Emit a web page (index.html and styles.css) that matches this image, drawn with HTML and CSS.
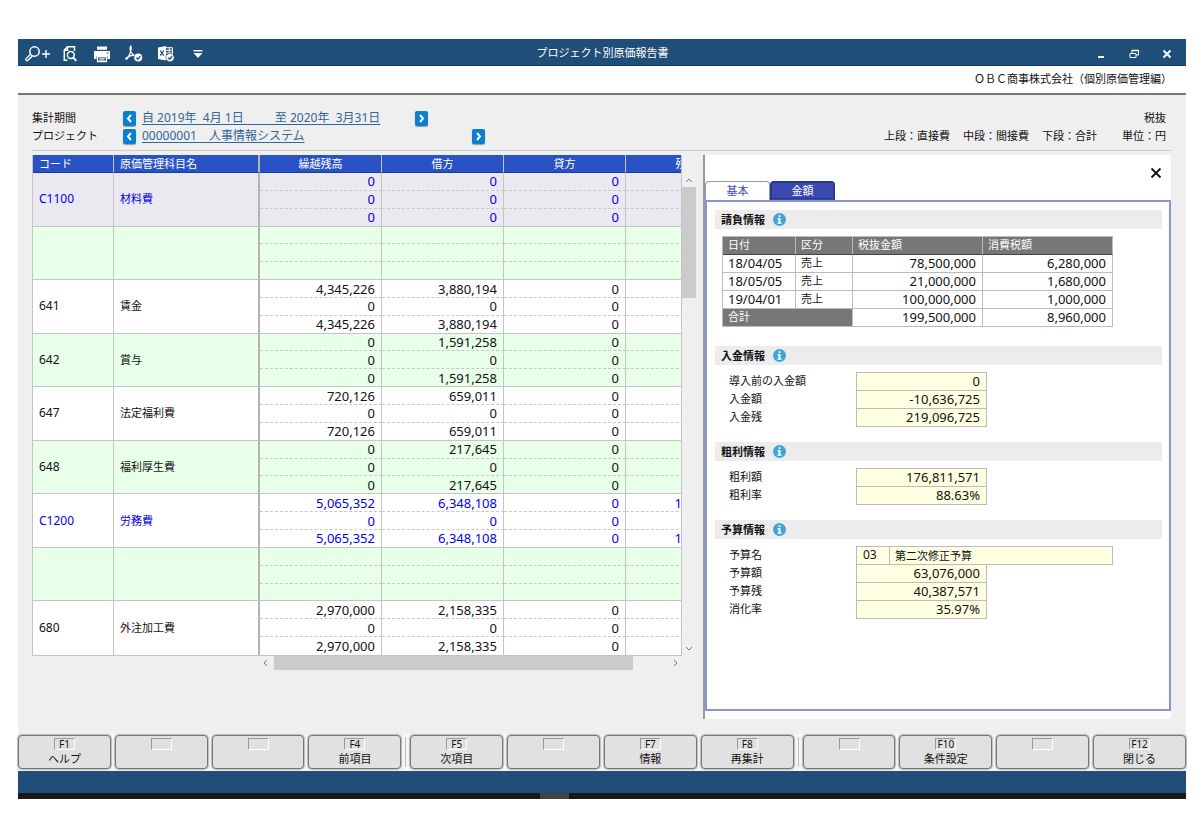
FILE: index.html
```html
<!DOCTYPE html>
<html lang="ja">
<head>
    <meta charset="UTF-8">
    <meta name="viewport" content="width=device-width, initial-scale=1.0">
    <title>プロジェクト別原価報告書</title>
    <link rel="stylesheet" href="styles.css">
</head>
<body>
    <div class="window">
        <header class="titlebar">
            <div class="tools">
                <button type="button" aria-label="検索">
                    <svg width="26" height="18" viewBox="0 0 26 18" fill="none" stroke="#fff">
                        <circle cx="9.5" cy="6.5" r="4.7" stroke-width="1.5"/>
                        <path d="M5.6 9.2L1.2 13.6a1.2 1.2 0 0 0 1.8 1.7L7.4 11" stroke-width="1.3"/>
                        <path d="M17 9h8M21 5v8" stroke-width="1.4"/>
                    </svg>
                </button>
                <button type="button" aria-label="プレビュー">
                    <svg width="16" height="18" viewBox="0 0 16 18" fill="none" stroke="#fff" stroke-width="1.5">
                        <path d="M12.5 6V1.8H5.5L2.3 5v10.2h3.2M5.5 2v3.2H2.5"/>
                        <circle cx="8.8" cy="10" r="3.4"/>
                        <path d="M11.2 12.4l3 3.4" stroke-width="2"/>
                    </svg>
                </button>
                <button type="button" aria-label="印刷">
                    <svg width="18" height="18" viewBox="0 0 18 18">
                        <path d="M4 1.5h10v3.2H4zM1 6h16v8h-2.5v-3h-11v3H1z" fill="#fff"/>
                        <path d="M4.5 11.5h9v5h-9z" fill="#1f4e79" stroke="#fff" stroke-width="1.3"/>
                        <path d="M6.3 13.2h5.4M6.3 15h5.4" stroke="#fff"/>
                        <path d="M13.5 8h2" stroke="#1f4e79"/>
                    </svg>
                </button>
                <button type="button" aria-label="PDF出力">
                    <svg width="18" height="18" viewBox="0 0 18 18" fill="none" stroke="#fff">
                        <path d="M5 1c2.2 0 1 4.5 0 7.2S2.5 14.5 1.2 14.2s1.3-3.4 8-4.2M5 2c-.5 3 1.3 6.500 4 8" stroke-width="1.3"/>
                        <circle cx="13.2" cy="12.6" r="4" fill="#fff" stroke="none"/>
                        <path d="M11.2 12.6l1.6 1.6 2.6-3" stroke="#1f4e79" stroke-width="1.3"/>
                    </svg>
                </button>
                <button type="button" aria-label="Excel出力">
                    <svg width="18" height="18" viewBox="0 0 18 18" fill="none">
                        <path d="M1 2.5L9 1v14.500L1 14z" fill="#fff"/>
                        <path d="M3.2 5.7l3.6 5M6.8 5.7l-3.6 5" stroke="#1f4e79" stroke-width="1.2"/>
                        <path d="M9 2.7h6.500v8H9M12.3 2.7v8M9 5.3h6.500M9 8h6.500" stroke="#fff"/>
                        <circle cx="13" cy="12.6" r="4.2" fill="#fff" stroke="#1f4e79" stroke-width=".6"/>
                        <path d="M11 12.6l1.6 1.6 2.6-3" stroke="#1f4e79" stroke-width="1.3"/>
                    </svg>
                </button>
                <button type="button" aria-label="その他">
                    <svg width="12" height="12" viewBox="0 0 12 12" fill="#fff">
                        <path d="M1.500 2h9v1.500h-9zM1.500 5h9L6 10z"/>
                    </svg>
                </button>
            </div>
            <h1>プロジェクト別原価報告書</h1>
            <div class="window-buttons">
                <button type="button" aria-label="最小化">
                    <svg width="12" height="12" viewBox="0 0 12 12"><path d="M3 9h6" stroke="#fff" stroke-width="2"/></svg>
                </button>
                <button type="button" aria-label="元に戻す">
                    <svg width="12" height="12" viewBox="0 0 12 12" fill="none" stroke="#fff">
                        <path d="M4 5V2.5h6.500V7H8M2 5.5h6v4H2z"/>
                        <path d="M3.5 2.5H11" stroke-width="1.5"/>
                    </svg>
                </button>
                <button type="button" aria-label="閉じる">
                    <svg width="12" height="12" viewBox="0 0 12 12"><path d="M2.5 2.5l7 7M9.5 2.5l-7 7" stroke="#fff" stroke-width="2"/></svg>
                </button>
            </div>
        </header>

        <div class="company">ＯＢＣ商事株式会社（個別原価管理編）</div>

        <div class="content">
            <div class="conditions">
                <div class="condition-list">
                    <div class="condition">
                        <span class="condition-name">集計期間</span>
                        <button type="button" class="step" aria-label="前の期間"><svg width="7" height="9" viewBox="0 0 7 9"><path d="M5 1L2 4.5 5 8"/></svg></button>
                        <a href="#" class="period">自 2019年  4月 1日          至 2020年  3月31日</a>
                        <button type="button" class="step" aria-label="次の期間"><svg width="7" height="9" viewBox="0 0 7 9"><path d="M2 1l3 3.5L2 8"/></svg></button>
                    </div>
                    <div class="condition">
                        <span class="condition-name">プロジェクト</span>
                        <button type="button" class="step" aria-label="前のプロジェクト"><svg width="7" height="9" viewBox="0 0 7 9"><path d="M5 1L2 4.5 5 8"/></svg></button>
                        <span class="project"><a href="#">00000001　人事情報システム</a></span>
                        <button type="button" class="step" aria-label="次のプロジェクト"><svg width="7" height="9" viewBox="0 0 7 9"><path d="M2 1l3 3.5L2 8"/></svg></button>
                    </div>
                </div>
                <div class="notes">
                    <div>税抜</div>
                    <div class="legend">
                        <span>上段：直接費</span>
                        <span>中段：間接費</span>
                        <span>下段：合計</span>
                        <span class="unit">単位：円</span>
                    </div>
                </div>
            </div>

            <main class="main">
                <section class="report">
                    <div class="grid-clip">
                        <table class="cost">
                            <colgroup>
                                <col class="col-code"><col class="col-name"><col class="col-amount"><col class="col-amount"><col class="col-amount"><col class="col-amount">
                            </colgroup>
                            <thead>
                                <tr><th class="left">コード</th><th class="left frozen">原価管理科目名</th><th>繰越残高</th><th>借方</th><th>貸方</th><th>残高</th></tr>
                            </thead>
                            <tbody class="selected total">
                                <tr><td rowspan="3" class="code">C1100</td><td rowspan="3" class="name">材料費</td><td>0</td><td>0</td><td>0</td><td></td></tr>
                                <tr><td>0</td><td>0</td><td>0</td><td></td></tr>
                                <tr><td>0</td><td>0</td><td>0</td><td></td></tr>
                            </tbody>
                            <tbody>
                                <tr><td rowspan="3" class="code"></td><td rowspan="3" class="name"></td><td></td><td></td><td></td><td></td></tr>
                                <tr><td></td><td></td><td></td><td></td></tr>
                                <tr><td></td><td></td><td></td><td></td></tr>
                            </tbody>
                            <tbody>
                                <tr><td rowspan="3" class="code">641</td><td rowspan="3" class="name">賃金</td><td>4,345,226</td><td>3,880,194</td><td>0</td><td></td></tr>
                                <tr><td>0</td><td>0</td><td>0</td><td></td></tr>
                                <tr><td>4,345,226</td><td>3,880,194</td><td>0</td><td></td></tr>
                            </tbody>
                            <tbody>
                                <tr><td rowspan="3" class="code">642</td><td rowspan="3" class="name">賞与</td><td>0</td><td>1,591,258</td><td>0</td><td></td></tr>
                                <tr><td>0</td><td>0</td><td>0</td><td></td></tr>
                                <tr><td>0</td><td>1,591,258</td><td>0</td><td></td></tr>
                            </tbody>
                            <tbody>
                                <tr><td rowspan="3" class="code">647</td><td rowspan="3" class="name">法定福利費</td><td>720,126</td><td>659,011</td><td>0</td><td></td></tr>
                                <tr><td>0</td><td>0</td><td>0</td><td></td></tr>
                                <tr><td>720,126</td><td>659,011</td><td>0</td><td></td></tr>
                            </tbody>
                            <tbody>
                                <tr><td rowspan="3" class="code">648</td><td rowspan="3" class="name">福利厚生費</td><td>0</td><td>217,645</td><td>0</td><td></td></tr>
                                <tr><td>0</td><td>0</td><td>0</td><td></td></tr>
                                <tr><td>0</td><td>217,645</td><td>0</td><td></td></tr>
                            </tbody>
                            <tbody class="total">
                                <tr><td rowspan="3" class="code">C1200</td><td rowspan="3" class="name">労務費</td><td>5,065,352</td><td>6,348,108</td><td>0</td><td>11,413,460</td></tr>
                                <tr><td>0</td><td>0</td><td>0</td><td></td></tr>
                                <tr><td>5,065,352</td><td>6,348,108</td><td>0</td><td>11,413,460</td></tr>
                            </tbody>
                            <tbody>
                                <tr><td rowspan="3" class="code"></td><td rowspan="3" class="name"></td><td></td><td></td><td></td><td></td></tr>
                                <tr><td></td><td></td><td></td><td></td></tr>
                                <tr><td></td><td></td><td></td><td></td></tr>
                            </tbody>
                            <tbody>
                                <tr><td rowspan="3" class="code">680</td><td rowspan="3" class="name">外注加工費</td><td>2,970,000</td><td>2,158,335</td><td>0</td><td></td></tr>
                                <tr><td>0</td><td>0</td><td>0</td><td></td></tr>
                                <tr><td>2,970,000</td><td>2,158,335</td><td>0</td><td></td></tr>
                            </tbody>
                        </table>
                    </div>
                    <div class="scroll-v">
                        <svg width="14" height="14" viewBox="0 0 14 14"><path d="M4 9l3-3 3 3"/></svg>
                        <div class="thumb"></div>
                        <svg width="14" height="14" viewBox="0 0 14 14"><path d="M4 5l3 3 3-3"/></svg>
                    </div>
                    <div class="scroll-h">
                        <svg width="14" height="14" viewBox="0 0 14 14"><path d="M7 4L4 7l3 3"/></svg>
                        <div class="track"><div class="thumb"></div></div>
                        <svg width="14" height="14" viewBox="0 0 14 14"><path d="M6 4l3 3-3 3"/></svg>
                    </div>
                </section>

                <aside class="panel">
                    <div class="panel-top">
                        <button type="button" class="panel-close" aria-label="パネルを閉じる">
                            <svg width="12" height="12" viewBox="0 0 12 12"><path d="M1.5 1.5l9 9M10.5 1.5l-9 9" stroke="#111" stroke-width="1.8"/></svg>
                        </button>
                    </div>
                    <div class="tabs">
                        <button type="button" class="tab">基本</button>
                        <button type="button" class="tab active">金額</button>
                    </div>
                    <div class="panel-body">
                        <h2>請負情報 <svg class="info" width="13" height="13" viewBox="0 0 13 13"><circle cx="6.5" cy="6.5" r="6.5"/><path d="M5.5 2.3h2V4h-2zM4.5 5h3v4.5h1v1.3h-4V9.500h1V6.3h-1z"/></svg></h2>
                        <table class="contract">
                            <thead>
                                <tr><th class="date">日付</th><th class="kind">区分</th><th>税抜金額</th><th>消費税額</th></tr>
                            </thead>
                            <tbody>
                                <tr><td>18/04/05</td><td class="kind">売上</td><td class="num">78,500,000</td><td class="num">6,280,000</td></tr>
                                <tr><td>18/05/05</td><td class="kind">売上</td><td class="num">21,000,000</td><td class="num">1,680,000</td></tr>
                                <tr><td>19/04/01</td><td class="kind">売上</td><td class="num">100,000,000</td><td class="num">1,000,000</td></tr>
                                <tr><th colspan="2">合計</th><td class="num">199,500,000</td><td class="num">8,960,000</td></tr>
                            </tbody>
                        </table>

                        <h2>入金情報 <svg class="info" width="13" height="13" viewBox="0 0 13 13"><circle cx="6.5" cy="6.5" r="6.5"/><path d="M5.5 2.3h2V4h-2zM4.5 5h3v4.5h1v1.3h-4V9.500h1V6.3h-1z"/></svg></h2>
                        <div class="fields">
                            <div class="field"><label for="prior">導入前の入金額</label><input id="prior" value="0" readonly></div>
                            <div class="field"><label for="paid">入金額</label><input id="paid" value="-10,636,725" readonly></div>
                            <div class="field"><label for="unpaid">入金残</label><input id="unpaid" value="219,096,725" readonly></div>
                        </div>

                        <h2>粗利情報 <svg class="info" width="13" height="13" viewBox="0 0 13 13"><circle cx="6.5" cy="6.5" r="6.5"/><path d="M5.5 2.3h2V4h-2zM4.5 5h3v4.5h1v1.3h-4V9.500h1V6.3h-1z"/></svg></h2>
                        <div class="fields">
                            <div class="field"><label for="profit">粗利額</label><input id="profit" value="176,811,571" readonly></div>
                            <div class="field"><label for="margin">粗利率</label><input id="margin" value="88.63%" readonly></div>
                        </div>

                        <h2>予算情報 <svg class="info" width="13" height="13" viewBox="0 0 13 13"><circle cx="6.5" cy="6.5" r="6.5"/><path d="M5.5 2.3h2V4h-2zM4.5 5h3v4.5h1v1.3h-4V9.500h1V6.3h-1z"/></svg></h2>
                        <div class="fields">
                            <div class="field"><label for="budgetCode">予算名</label><input id="budgetCode" class="budget-code" value="03" readonly><input class="budget-name" aria-label="予算名称" value="第二次修正予算" readonly></div>
                            <div class="field"><label for="budget">予算額</label><input id="budget" value="63,076,000" readonly></div>
                            <div class="field"><label for="budgetLeft">予算残</label><input id="budgetLeft" value="40,387,571" readonly></div>
                            <div class="field"><label for="usage">消化率</label><input id="usage" value="35.97%" readonly></div>
                        </div>
                    </div>
                </aside>
            </main>
        </div>

        <nav class="fkeys">
            <button type="button"><kbd>F1</kbd>ヘルプ</button>
            <button type="button" aria-label="F2"><kbd></kbd></button>
            <button type="button" aria-label="F3"><kbd></kbd></button>
            <button type="button"><kbd>F4</kbd>前項目</button>
            <span class="divider"></span>
            <button type="button"><kbd>F5</kbd>次項目</button>
            <button type="button" aria-label="F6"><kbd></kbd></button>
            <button type="button"><kbd>F7</kbd>情報</button>
            <button type="button"><kbd>F8</kbd>再集計</button>
            <span class="divider"></span>
            <button type="button" aria-label="F9"><kbd></kbd></button>
            <button type="button"><kbd>F10</kbd>条件設定</button>
            <button type="button" aria-label="F11"><kbd></kbd></button>
            <button type="button"><kbd>F12</kbd>閉じる</button>
        </nav>
        <div class="statusbar"></div>
        <div class="taskbar"><span></span></div>
    </div>
</body>
</html>
```

FILE: styles.css
```css
* {
    box-sizing: border-box;
}
body {
    margin: 0;
    padding: 39px 18px;
    background-color: #fff;
    color: #111;
    font-family: 'Noto Sans', 'Noto Sans CJK JP', sans-serif;
    font-size: 11px;
    line-height: 18px;
}
button, input {
    font: inherit;
    color: inherit;
}
button {
    padding: 0;
    border: none;
    background: none;
    cursor: pointer;
}
.window {
    display: flex;
    flex-direction: column;
    min-height: calc(100vh - 78px);
}

/* Title bar */
.titlebar {
    display: grid;
    grid-template-columns: 1fr auto 1fr;
    height: 27px;
    padding: 0 3px 0 4px;
    background-color: #1f4e79;
    border-bottom: 1px solid #123a66;
    color: #fff;
}
.titlebar h1 {
    margin: 0;
    font-size: 11px;
    font-weight: 400;
    line-height: 28px;
}
.tools, .window-buttons {
    display: flex;
}
.window-buttons {
    justify-content: flex-end;
}
.titlebar button {
    display: flex;
    align-items: center;
    justify-content: center;
    width: 32px;
    padding-top: 2px;
}
.titlebar .window-buttons button {
    width: 33px;
}
.company {
    height: 29px;
    padding: 3px 14px 0 0;
    border-bottom: 2px solid #777;
    text-align: right;
    line-height: 20px;
}

/* Conditions */
.content {
    display: flex;
    flex-direction: column;
    flex: 1;
    padding: 14px 15px 15px 14px;
    background-color: #efefef;
}
.conditions {
    display: flex;
    justify-content: space-between;
    padding-bottom: 5px;
    border-bottom: 1px solid #ccc;
}
.condition {
    display: flex;
    align-items: center;
    height: 18px;
}
.condition-name {
    width: 91px;
}
.condition a {
    color: #369;
    font-size: 12px;
    white-space: pre;
    text-underline-offset: 2px;
}
.period {
    width: 273px;
}
.project {
    width: 330px;
}
.step {
    display: flex;
    align-items: center;
    justify-content: center;
    width: 13px;
    height: 15px;
    margin-right: 6px;
    border-radius: 2px;
    background-color: #0b7fd0;
    box-shadow: 0 1px 1px #999;
}
.step path {
    fill: none;
    stroke: #fff;
    stroke-width: 2;
}
.notes {
    padding-right: 5px;
    text-align: right;
}
.legend {
    display: flex;
    gap: 13px;
}
.unit {
    margin-left: 12px;
}

/* Cost table */
.main {
    display: grid;
    grid-template-columns: minmax(0, 1fr) 468px;
    gap: 7px;
    flex: 1;
    padding-top: 4px;
}
.report {
    display: grid;
    grid-template-columns: minmax(0, 1fr) 14px;
    grid-template-rows: auto 14px;
    align-content: start;
}
.grid-clip {
    overflow: hidden;
    border: 1px solid #c4c4c4;
    border-top: none;
}
table {
    border-collapse: separate;
    border-spacing: 0;
    table-layout: fixed;
}
th {
    font-weight: 400;
}
.cost {
    width: 715px;
    height: 500px;
    line-height: 16px;
}
.col-code {
    width: 81px;
}
.col-name {
    width: 146px;
}
.col-amount {
    width: 122px;
}
.cost th {
    height: 18px;
    padding: 0 6px;
    background-color: #2952c4;
    border-right: 1px solid #c4c4c4;
    border-bottom: 1px solid #1b3a95;
    color: #fff;
}
.cost th.left {
    text-align: left;
}
.cost td {
    height: 17px;
    padding: 0 6px;
    border-right: 1px solid #c4c4c4;
    border-bottom: 1px dashed #c8c8c8;
    font-size: 13px;
    text-align: right;
}
.cost tr:last-child td, .cost td.code, .cost td.name {
    border-bottom: 1px solid #c4c4c4;
}
.cost tbody:last-child tr:last-child td, .cost tbody:last-child td.code, .cost tbody:last-child td.name {
    border-bottom: none;
}
.cost td.code, .cost td.name {
    font-size: 12px;
    text-align: left;
}
.cost td.name {
    font-size: 11px;
}
.cost td.name, .cost th.frozen {
    border-right: 2px solid #b4b4b4;
}
.cost tbody {
    background-color: #fff;
}
.cost tbody:nth-of-type(even) {
    background-color: #e8ffe8;
}
.cost tbody.selected {
    background-color: #e9e9ef;
}
.cost .total td {
    color: #0000f0;
}

/* Scroll bars */
.scroll-v {
    display: flex;
    flex-direction: column;
    padding-top: 18px;
}
.scroll-v .thumb {
    height: 111px;
    margin-bottom: auto;
}
.scroll-h {
    display: flex;
    padding-left: 228px;
}
.track {
    flex: 1;
}
.track .thumb {
    width: 91%;
    height: 14px;
}
.thumb {
    background-color: #cbcbcb;
}
.scroll-v path, .scroll-h path {
    fill: none;
    stroke: #777;
}

/* Info panel */
.panel {
    display: flex;
    flex-direction: column;
    padding-bottom: 8px;
    border-left: 2px solid #999;
    background-color: #fff;
}
.panel-top {
    height: 26px;
    padding: 12px 9px 0 0;
}
.panel-close {
    display: block;
    margin-left: auto;
}
.panel-close svg {
    display: block;
}
.tabs {
    display: flex;
}
.tab {
    width: 65px;
    height: 19px;
    border: 1px solid #8a95d0;
    border-bottom: none;
    border-radius: 4px 4px 0 0;
    color: #3f4fb5;
    line-height: 18px;
}
.tab.active {
    background-color: #3b4ab0;
    border-color: #2b3790;
    color: #fff;
    outline: 1px dotted #1c2560;
    outline-offset: -2px;
}
.panel-body {
    flex: 1;
    padding: 8px 7px 8px 8px;
    border: 2px solid #8a95d0;
}
.panel-body h2 {
    display: flex;
    align-items: center;
    gap: 8px;
    height: 19px;
    margin: 0 0 7px;
    padding-left: 6px;
    background-color: #ececec;
    font-size: 11px;
    font-weight: 700;
}
.info circle {
    fill: #3fa5d8;
}
.info path {
    fill: #fff;
}
.contract {
    width: 391px;
    margin: 0 0 19px 7px;
    border-top: 1px solid #bbb;
    border-left: 1px solid #bbb;
    line-height: 16px;
}
.contract th, .contract td {
    height: 18px;
    padding: 0 5px 1px;
    border-right: 1px solid #bbb;
    border-bottom: 1px solid #bbb;
    text-align: left;
}
.contract th {
    background-color: #777;
    color: #fff;
}
.contract thead th {
    border-bottom-color: #444;
}
.contract td {
    font-size: 13px;
}
.contract .date {
    width: 73px;
}
.contract .kind {
    width: 57px;
    font-size: 11px;
}
.contract td.num {
    padding-right: 6px;
    text-align: right;
}
.fields {
    margin-bottom: 15px;
    padding: 0 0 1px 14px;
}
.field {
    display: flex;
    height: 18px;
}
.field label {
    width: 127px;
}
.field input {
    width: 131px;
    height: 19px;
    padding: 0 6px 2px;
    border: 1px solid #bbb;
    border-radius: 0;
    background-color: #ffffe1;
    font-size: 13px;
    line-height: 15px;
    text-align: right;
}
.field .budget-code {
    width: 34px;
    font-size: 12px;
    text-align: left;
}
.field .budget-name {
    width: 223px;
    padding: 0 5px 2px;
    border-left: none;
    font-size: 11px;
    text-align: left;
}

/* Function keys */
.fkeys {
    display: flex;
    gap: 4px;
    padding: 1px 0 2px;
    background-color: #f6f6f6;
}
.fkeys button {
    display: flex;
    flex: 1;
    flex-direction: column;
    align-items: center;
    height: 34px;
    padding-top: 2px;
    border: 1px solid #777;
    border-radius: 4px;
    background-color: #e1e1e1;
    box-shadow: 0 0 1px 1px #bbb;
    line-height: 17px;
}
.fkeys kbd {
    width: 21px;
    height: 12px;
    border: 1px solid;
    border-color: #999 #fff #fff #999;
    font: inherit;
    font-size: 10px;
    line-height: 10px;
    text-align: center;
}
.divider {
    width: 1px;
    margin: 2px 0;
    background-color: #bbb;
}
.statusbar {
    height: 22px;
    background-color: #1f4e79;
}
.taskbar {
    height: 6px;
    background-color: #181818;
}
.taskbar span {
    display: block;
    width: 29px;
    height: 6px;
    margin: 0 auto;
    position: relative;
    right: 48px;
    background-color: #444;
}
```
